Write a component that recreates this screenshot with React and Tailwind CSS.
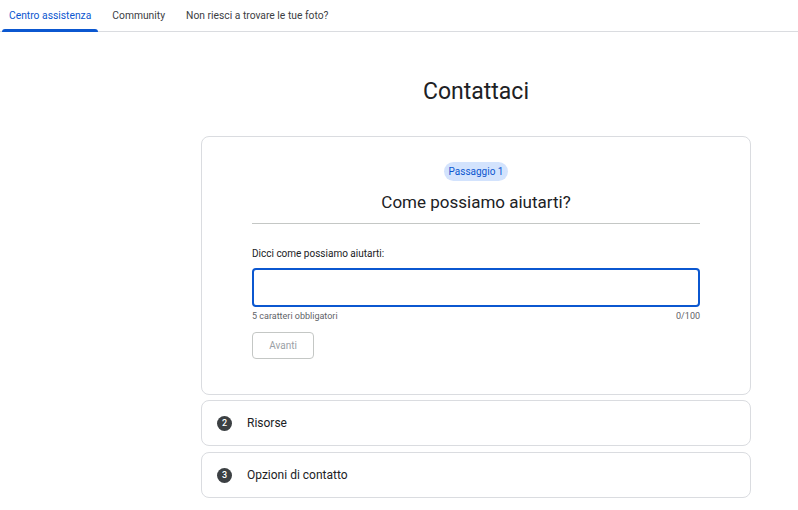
export default function App() {
  const font = { fontFamily: 'Roboto, "Noto Sans", sans-serif' };
  return (
    <div className="w-[798px] h-[510px] bg-white text-[#202124] overflow-hidden" style={font}>
      <div className="flex h-[32px] border-b border-[#dadce0] pl-[2px] gap-[7px] text-[10.3px]">
        <div className="relative px-[7px] flex items-center text-[#0b57d0]">
          Centro assistenza
          <div className="absolute left-0 right-0 bottom-[-1px] h-[3px] bg-[#0b57d0] rounded-t-[3px]" />
        </div>
        <div className="px-[7px] flex items-center text-[#3c4043]">Community</div>
        <div className="px-[7px] flex items-center text-[#3c4043]">Non riesci a trovare le tue foto?</div>
      </div>
      <div className="pl-[201px]">
        <div className="w-[550px]">
          <h1 className="text-center text-[23px] leading-[28px] mt-[46px] text-[#202124]">Contattaci</h1>
          <div className="mt-[30px] border border-[#dadce0] rounded-[8px] px-[50px] pt-[25px] pb-[35px]">
            <div className="flex justify-center">
              <span className="bg-[#d3e3fd] text-[#0b57d0] text-[10px] leading-[19px] px-[5px] rounded-full">Passaggio 1</span>
            </div>
            <div className="text-center text-[17px] leading-[22px] mt-[10px]">Come possiamo aiutarti?</div>
            <div className="mt-[10px] border-t border-[#c4c7c5]" />
            <div className="mt-[23px] text-[10px] leading-[14px] text-[#202124]">Dicci come possiamo aiutarti:</div>
            <div className="mt-[7px] h-[39px] border-2 border-[#0b57d0] rounded-[4px]" />
            <div className="mt-[3px] flex justify-between text-[9px] leading-[12px] text-[#5f6368]">
              <span>5 caratteri obbligatori</span>
              <span>0/100</span>
            </div>
            <div className="mt-[10px] w-[62px] h-[27px] border border-[#c4c7c5] rounded-[4px] flex items-center justify-center text-[10px] text-[#9aa0a6]">Avanti</div>
          </div>
          <div className="mt-[5px] flex flex-col gap-[6px]">
            {[["2", "Risorse"], ["3", "Opzioni di contatto"]].map(([n, t]) => (
              <div key={n} className="h-[46px] border border-[#dadce0] rounded-[8px] flex items-center pl-[15px]">
                <span className="w-[15px] h-[15px] rounded-full bg-[#3c4043] text-white text-[9px] leading-none font-medium flex items-center justify-center">{n}</span>
                <span className="ml-[15px] text-[12px] text-[#202124]">{t}</span>
              </div>
            ))}
          </div>
        </div>
      </div>
    </div>
  );
}
